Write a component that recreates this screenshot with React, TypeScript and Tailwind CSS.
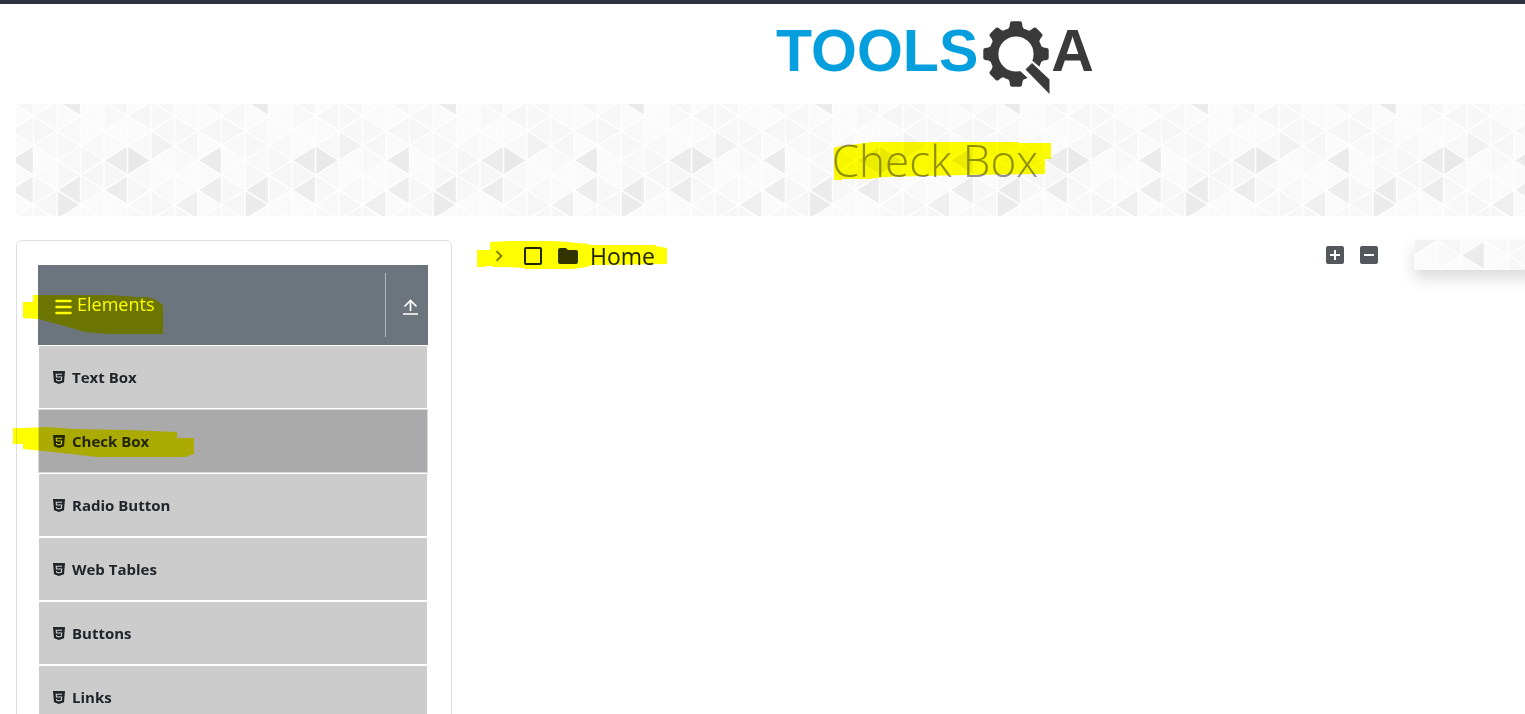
import { useState } from "react";
import { MdAddBox, MdChevronRight, MdFolder, MdIndeterminateCheckBox } from "react-icons/md";

const items = ["Text Box", "Check Box", "Radio Button", "Web Tables", "Buttons", "Links"];

const COL = 23.5;
const ROW = 29.6;

// Keys are strip, index of the triangle's centre height in half rows, and direction.
const accents: Record<string, string> = {
  "1,-1,l": "#ebebeb",
  "7,3,l": "#ebebeb",
  "7,5,l": "#ededed",
  "3,3,l": "#ebebeb",
  "4,3,r": "#e9e9e9",
  "1,5,l": "#ebebeb",
  "3,5,l": "#ececec",
  "1,6,r": "#ebebeb",
  "6,6,l": "#efefef",
  "5,2,r": "#f1f1f1",
};
const soft = ["#f8f8f8", "#fafafa", "#f6f6f6", "#fbfbfb", "#f7f7f7"];

function buildTriangles() {
  const out: { d: string; fill: string; key: string }[] = [];
  for (let s = -1; s < 9; s++) {
    for (let h = -2; h < 9; h++) {
      const strip = (s + 8) % 8;
      const dir = Math.abs(s + h) % 2 === 0 ? "l" : "r";
      const x0 = 17.5 + s * COL;
      const x1 = x0 + COL;
      const y = 12 + (h * ROW) / 2;
      const apex = dir === "l" ? x0 : x1;
      const base = dir === "l" ? x1 : x0;
      const fill = accents[`${strip},${h},${dir}`] ?? soft[(strip * 7 + (h + 2) * 3 + ((strip * h) % 3) + 3) % 5];
      out.push({
        d: `M${apex} ${y}L${base} ${y - ROW / 2}V${y + ROW / 2}Z`,
        fill,
        key: `${s},${h}`,
      });
    }
  }
  return out;
}
const triangles = buildTriangles();
const gridLines = triangles.map((t) => t.d).join("");

function TrianglePattern({ id, shift }: { id: string; shift?: string }) {
  return (
    <svg className="absolute inset-0 h-full w-full" aria-hidden="true">
      <defs>
        <pattern id={id} width="188" height="112" patternUnits="userSpaceOnUse" patternTransform={shift}>
          {triangles.map((t) => (
            <path key={t.key} d={t.d} fill={t.fill} />
          ))}
          <path d={gridLines} fill="none" stroke="#fefefe" strokeWidth="1.500" strokeLinejoin="round" />
        </pattern>
      </defs>
      <rect width="100%" height="100%" fill={`url(#${id})`} />
    </svg>
  );
}

function Gear() {
  return (
    <svg viewBox="0 0 68 74" className="mt-[17px] ml-[5px] h-[74px] w-[68px] shrink-0" fill="#3a3a3a" aria-hidden="true">
      <circle cx="33" cy="33" r="22" fill="none" stroke="#3a3a3a" strokeWidth="8.800" />
      {[0, 45, 90, 135, 180, 225, 270, 315].map((a) => (
        <path key={a} d="M23 9.500Q26 8 26.500 5.500L27 2Q27.300 0.300 29 0.300H37Q38.700 0.300 39 2L39.500 5.500Q40 8 43 9.500Z" transform={`rotate(${a} 33 33)`} />
      ))}
      <path d="M36.500 49.500L47 59L68 80V56L57.500 46.500L49 39.500L42 44Z" fill="#fff" />
      <path d="M49 42L66.500 58.500V73L42.500 48.500Z" />
    </svg>
  );
}

function Html5Icon() {
  return (
    <svg viewBox="0 0 12 13" className="h-[13px] w-3 shrink-0" aria-hidden="true">
      <path d="M0 0H12L11 11.300L6 13L1 11.300Z" fill="#212529" />
      <path d="M9.200 3.200H3.200L3.500 6H8.700L8.400 9.100L6 9.900L3.600 9.200L3.500 8" fill="none" stroke="#cfcfcf" strokeWidth="1.100" />
    </svg>
  );
}

function Marker({ points, className }: { points: string; className: string }) {
  return (
    <svg className={`pointer-events-none absolute mix-blend-multiply ${className}`} fill="#ffff00" aria-hidden="true">
      <polygon points={points} />
    </svg>
  );
}

export default function App() {
  const [active, setActive] = useState("Check Box");
  const [checked, setChecked] = useState(false);

  return (
    <div className="h-screen overflow-hidden bg-white font-['Open_Sans','Noto_Sans',sans-serif] text-[#212529]">
      <div className="h-1 bg-[#2f3241]" />
      <div className="w-[122.62%] px-4">
        <header className="flex h-[100px] justify-center">
          <a href="#home" aria-label="TOOLSQA" className="flex items-start font-['Liberation_Sans',sans-serif] text-[59px] leading-[58px] font-bold">
            <span className="mt-[18px] text-[#069fde]">TOOLS</span>
            <Gear />
            <span className="mt-[18px] text-[#3a3a3a]">A</span>
          </a>
        </header>

        <div className="relative flex h-28 items-center justify-center">
          <TrianglePattern id="banner-triangles" />
          <h1 className="relative text-[44px] leading-[56px] font-light text-[#8f8f94]">
            Check Box
            <Marker className="top-[8px] left-[2px] h-[42px] w-[220px]" points="2,7 38,2 184,2 184,3 217,3 217,19 211,19 211,34 130,35 50,37 35,39 8,39 8,40 0,40 0,8" />
          </h1>
        </div>

        <div className="mt-6 grid grid-cols-[436px_minmax(0,1fr)_440px] gap-6">
          <nav aria-label="Elements" className="rounded-md border border-[#dedede] py-6 pr-[23px] pl-[21px]">
            <div className="relative flex h-20 items-center bg-[#6c757d] text-white">
              <svg viewBox="0 0 17 16" className="mt-1 ml-[17px] h-4 w-[17px]" stroke="currentColor" strokeWidth="2.500" strokeLinecap="round" aria-hidden="true">
                <path d="M1.500 2H15.500M1.500 8H15.500M1.500 14H15.500" />
              </svg>
              <span className="mb-[2px] ml-[5px] text-lg">Elements</span>
              <button type="button" aria-label="Collapse" className="ml-auto flex h-16 w-[43px] items-center justify-center border-l border-[#b5babe] pl-[6px]">
                <svg viewBox="0 0 15 16" className="mt-1 h-4 w-[15px]" fill="none" stroke="currentColor" strokeWidth="1.700" aria-hidden="true">
                  <path d="M7.500 12V1.500M1.500 7.500L7.500 1.500L13.500 7.500M0 15H15" />
                </svg>
              </button>
              <Marker className="top-[28px] left-[-15px] h-[42px] w-[142px]" points="10,2 87,2 115,4 125,4 133,7 140,12 140,41 85,41 62,39 45,34 15,26 0,25 0,9 10,9" />
            </div>
            <ul>
              {items.map((label) => (
                <li key={label} className="relative">
                  <button
                    type="button"
                    onClick={() => setActive(label)}
                    className={`flex h-16 w-full items-center border pl-[14px] text-[15px] font-bold ${
                      active === label ? "border-[#d5d9de] bg-[#aaaaaa]" : "border-white bg-[#cccccc]"
                    }`}
                  >
                    <Html5Icon />
                    <span className="ml-[7px]">{label}</span>
                  </button>
                  {label === "Check Box" && (
                    <Marker className="top-[18px] left-[-25px] h-[32px] w-[182px]" points="0,1 10,1 34,0 60,2 114,3 164,5 164,11 181,11 181,27 172,30 85,30 40,25 10,22 10,17 0,17" />
                  )}
                </li>
              ))}
            </ul>
          </nav>

          <main>
            <div className="flex items-start">
              <div className="relative flex h-8 items-center gap-[14px]">
                <button type="button" aria-label="Expand Home" className="ml-3 text-[#777]">
                  <MdChevronRight size={22} />
                </button>
                <input
                  id="home-node"
                  type="checkbox"
                  checked={checked}
                  onChange={() => setChecked(!checked)}
                  className="h-[18px] w-[18px] appearance-none rounded-[2px] border-2 border-[#212529] checked:bg-[#212529]"
                />
                <label htmlFor="home-node" className="flex items-center gap-[10px] text-[23px]">
                  <MdFolder size={24} className="text-[#33332a]" />
                  Home
                </label>
                <Marker
                  className="top-[1px] left-[1px] h-[30px] w-[192px]"
                  points="0,9 13,9 13,1 33,0 76,0 91,1 100,2 112,3 113,4 179,4 179,5 190,7 190,23 116,24 109,26 96,28 47,28 47,27 30,26 16,26 16,25 9,25 9,26 0,26"
                />
              </div>
              <div className="mt-[3px] mr-[9px] ml-auto flex gap-[10px] text-[#54585c]">
                <button type="button" aria-label="Expand all"><MdAddBox size={24} /></button>
                <button type="button" aria-label="Collapse all"><MdIndeterminateCheckBox size={24} /></button>
              </div>
            </div>
          </main>

          <aside className="relative h-[30px] shadow-[0_8px_16px_rgba(0,0,0,0.15)]">
            <TrianglePattern id="aside-triangles" shift="translate(-135 -41)" />
          </aside>
        </div>
      </div>
    </div>
  );
}
